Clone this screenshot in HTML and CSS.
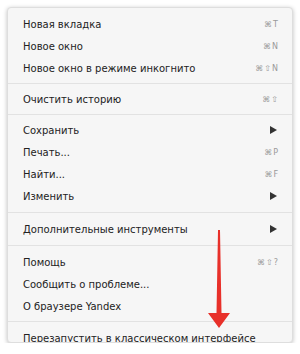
FILE: index.html
```html
<!doctype html>
<html>
<head>
    <title>Menu</title>
    <link rel="stylesheet" href="styles.css">
</head>
<body>
    <div class = "menu">
        <ul class = "menu__list">
            <li class = "menu__item"><span>Новая вкладка</span><span class = "menu__key">⌘T</span></li>
            <li class = "menu__item"><span>Новое окно</span><span class = "menu__key">⌘N</span></li>
            <li class = "menu__item"><span>Новое окно в режиме инкогнито</span><span class = "menu__key">⌘⇧N</span></li>
            <li class = "menu__sep"></li>
            <li class = "menu__item"><span>Очистить историю</span><span class = "menu__key">⌘⇧</span></li>
            <li class = "menu__sep"></li>
            <li class = "menu__item"><span>Сохранить</span><span class = "menu__sub"></span></li>
            <li class = "menu__item"><span>Печать...</span><span class = "menu__key">⌘P</span></li>
            <li class = "menu__item"><span>Найти...</span><span class = "menu__key">⌘F</span></li>
            <li class = "menu__item"><span>Изменить</span><span class = "menu__sub"></span></li>
            <li class = "menu__sep menu__sep--wide"></li>
            <li class = "menu__item"><span>Дополнительные инструменты</span><span class = "menu__sub"></span></li>
            <li class = "menu__sep menu__sep--wide"></li>
            <li class = "menu__item"><span>Помощь</span><span class = "menu__key">⌘⇧?</span></li>
            <li class = "menu__item"><span>Сообщить о проблеме...</span></li>
            <li class = "menu__item"><span>О браузере Yandex</span></li>
            <li class = "menu__sep menu__sep--last"></li>
            <li class = "menu__item"><span>Перезапустить в классическом интерфейсе</span></li>
        </ul>

        <svg class = "pointer" width = "26" height = "104" viewBox = "0 0 26 104">
            <path d = "M12 0 L14 0 L15.5 83 L24 83 L13 98 L2 83 L10.5 83 Z" fill = "#e8302a"/>
        </svg>
    </div>
</body>
</html>
```

FILE: styles.css
```css
* {
    box-sizing: border-box;
}

body {
    margin: 0;
    background: #fff;
    font-family: "DejaVu Sans", sans-serif;
}

.menu {
    position: relative;
    width: 286px;
    height: 336px;
    margin: 7px 0 0 7px;
    background: #f6f6f6;
    border: 1px solid #dedede;
    border-radius: 4px;
    box-shadow: 0 1px 4px rgba(0, 0, 0, 0.25);
    padding: 1px 0 0;
    overflow: hidden;
}

.menu__list {
    list-style: none;
    margin: 0;
    padding: 4px 0 0;
}

.menu__item {
    display: flex;
    justify-content: space-between;
    align-items: center;
    height: 22px;
    padding: 0 13px 0 15px;
    font-size: 10px;
    color: #222;
}

.menu__key {
    font-size: 8px;
    color: #9a9a9a;
    letter-spacing: 1px;
}

.menu__sub {
    width: 0;
    height: 0;
    border-top: 4px solid transparent;
    border-bottom: 4px solid transparent;
    border-left: 7px solid #333;
    margin-right: 2px;
}

.menu__sep {
    height: 1px;
    margin: 4px 0;
    background: #e2e2e2;
}

.menu__sep--wide {
    margin: 5px 0;
}

.menu__sep--last {
    margin: 4px 0 5px;
}

.pointer {
    position: absolute;
    left: 198px;
    top: 222px;
}
```
